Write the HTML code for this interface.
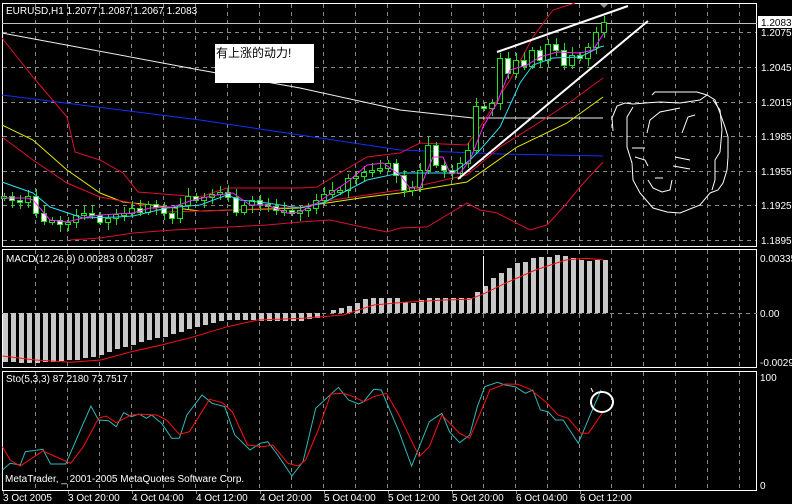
<!DOCTYPE html>
<html><head><meta charset="utf-8"><style>
html,body{margin:0;padding:0;background:#000;width:792px;height:504px;overflow:hidden}
svg{display:block}
text{font-family:"Liberation Sans","Noto Sans CJK SC",sans-serif;font-size:10px;fill:#fff}
</style></head><body>
<svg id="s" width="792" height="504" xmlns="http://www.w3.org/2000/svg">
<g id="grid" stroke="#8a8a8a" stroke-dasharray="4,4" stroke-width="1"></g>
<g fill="none" stroke-width="1">
<rect x="2.5" y="3.5" width="754" height="243" stroke="#fff"/>
<rect x="2.5" y="249.5" width="754" height="118" stroke="#fff"/>
<rect x="2.5" y="371.5" width="754" height="119" stroke="#fff"/>
<line x1="2" y1="23.5" x2="757" y2="23.5" stroke="#c0c0c0"/>
<line x1="2" y1="313.5" x2="757" y2="313.5" stroke="#8a8a8a" stroke-dasharray="4,4"/>
</g>
<g id="bb" fill="none" stroke-width="1">
<polyline stroke="#f0f0f0" points="2,33 200,70 300,88 400,110 473,118 603,118"/>
<polyline stroke="#1030ff" points="2,95 200,120 400,150 500,154 603,156"/>
<polyline stroke="#e8e800" points="2,125 33,140 67,170 100,193 123,202 143,204 200,211 300,208 320,204 367,197 400,193 467,182 517,147 567,123 603,97"/>
<polyline stroke="#dd1030" points="2,38 33,77 67,117 75,152 100,160 123,173 138,192 200,197 227,188 300,188 317,187 333,177 367,157 400,153 420,143 467,145 480,127 510,80 533,37 553,10 575,3"/>
<polyline stroke="#dd1030" points="2,137 33,160 67,183 100,197 133,203 167,212 233,210 300,207 333,200 400,190 467,175 500,147 540,122 573,100 603,78"/>
<polyline stroke="#dd1030" points="70,240 100,238 133,233 173,230 267,225 300,222 330,220 367,228 387,232 400,228 427,227 467,203 480,210 497,213 530,230 547,225 567,203 580,187 603,162"/>
</g>
<g id="candles"></g>
<g fill="none" stroke-width="1">
<polyline stroke="#30e0f0" points="2,182 33,193 50,207 83,218 117,217 133,216 167,208 200,205 227,195 240,200 267,203 300,208 323,203 367,180 400,173 453,173 470,160 480,150 500,127 520,83 533,65 553,58 580,57 600,47 604,46"/>
<polyline stroke="#ff20ff" points="2,198 27,198 33,200 50,220 67,222 87,217 100,215 133,213 150,208 173,207 193,200 217,195 233,193 250,205 267,205 287,213 300,212 317,203 350,180 367,165 383,163 400,175 410,188 420,188 433,157 443,157 450,173 460,173 470,160 483,127 497,103 510,70 527,65 540,57 557,52 580,53 593,50 604,33"/>
<line x1="458" y1="179" x2="648" y2="21" stroke="#fff" stroke-width="2"/>
<line x1="497" y1="52" x2="628" y2="6" stroke="#fff" stroke-width="2"/>
</g>
<polygon points="600,4 608,4 604,8" fill="#909090"/>
<g fill="none" stroke="#fff" stroke-width="1">
<polyline points="652,95 655,92 697,92 707,95 715,100 720,113 725,127 728,137 728,157 727,170 723,183 718,190 710,193"/>
<polyline points="613,131 612,118 617,106 625,103 633,104 645,103 660,102 680,103 700,100 707,95"/>
<polyline points="633,107 627,117 627,147 632,163 633,180 640,193 653,208 667,212 680,213 700,205 710,193"/>
<polyline points="647,133 650,120 660,112 680,108"/>
<polyline points="682,133 688,117 695,115"/>
<polyline points="632,148 645,148"/><polyline points="635,157 645,160 648,166"/>
<polyline points="675,157 690,160"/><polyline points="673,166 690,169"/>
<polyline points="648,180 653,188 662,192 670,190 672,180"/><polyline points="655,178 663,178"/>
<polyline points="713,100 720,110 722,130 720,152 715,160 715,180 712,190"/>
</g>
<rect x="215" y="44" width="99" height="39" fill="#fff"/>
<text x="216" y="57" style="fill:#000;font-size:12px">有上涨的动力!</text>
<text x="6" y="14">EURUSD,H1  1.2077 1.2087 1.2067 1.2083</text>
<rect x="758" y="16" width="34" height="12" fill="#fff"/>
<text x="761" y="26" style="fill:#000">1.2083</text>
<g id="lbl"></g>
<g id="hist" fill="#c8c8c8"></g>
<polyline fill="none" stroke="#ff1010" stroke-width="1" id="sig"/>
<line x1="483.5" y1="256" x2="483.5" y2="292" stroke="#fff"/>
<text x="6" y="262">MACD(12,26,9) 0.00283 0.00287</text>
<polyline fill="none" stroke="#30b8b8" id="stoK"/>
<polyline fill="none" stroke="#ff1010" id="stoD"/>
<ellipse cx="602" cy="402" rx="11" ry="10" fill="none" stroke="#fff" stroke-width="2"/>
<line x1="591" y1="388" x2="593" y2="392" stroke="#fff"/>
<text x="6" y="382">Sto(5,3,3) 87.2180 73.7517</text>
<text x="5" y="482">MetaTrader, _ 2001-2005 MetaQuotes Software Corp.</text>
</svg>
<script>
var NS="http://www.w3.org/2000/svg",s=document.getElementById('s');
function el(p,t,a,tx){var e=document.createElementNS(NS,t);for(var k in a)e.setAttribute(k,a[k]);if(tx)e.textContent=tx;document.getElementById(p).appendChild(e);return e;}
var vx=[];for(var x=35;x<757;x+=32)vx.push(x);
vx.forEach(function(x){el('grid','line',{x1:x+.5,y1:4,x2:x+.5,y2:246});el('grid','line',{x1:x+.5,y1:250,x2:x+.5,y2:367});el('grid','line',{x1:x+.5,y1:372,x2:x+.5,y2:490});});
var hy=[[32,'1.2075'],[67,'1.2045'],[102,'1.2015'],[136,'1.1985'],[171,'1.1955'],[205,'1.1925'],[240,'1.1895']];
hy.forEach(function(h){el('grid','line',{x1:3,y1:h[0]+.5,x2:756,y2:h[0]+.5});el('lbl','text',{x:761,y:h[0]+4},h[1]);});
[[262,'0.00335'],[317,'0.00'],[366,'-0.0029'],[381,'100'],[489,'0']].forEach(function(h){el('lbl','text',{x:760,y:h[0]},h[1]);});
var d=['3 Oct 2005','3 Oct 20:00','4 Oct 04:00','4 Oct 12:00','4 Oct 20:00','5 Oct 04:00','5 Oct 12:00','5 Oct 20:00','6 Oct 04:00','6 Oct 12:00'];
d.forEach(function(t,i){var x=3+64*i+(i?1:0);el('lbl','text',{x:x,y:501},t);el('grid','line',{x1:x+.5,y1:491,x2:x+.5,y2:494,'stroke-dasharray':'none'});});
var c=[196,200,202,196,213,221,220,224,222,215,213,215,222,218,214,213,208,212,204,207,213,218,205,196,200,197,194,192,197,212,205,200,204,206,210,210,213,210,208,200,194,190,190,178,176,172,170,168,163,175,190,187,170,145,165,170,173,163,150,106,108,103,58,73,60,66,50,60,44,50,65,55,58,47,32,22];
var prev=198;
c.forEach(function(cl,i){var x=4+8*i,o=prev;var top=Math.min(o,cl),bot=Math.max(o,cl);if(bot-top<2){bot=top+2;}
var hi=top-3-((i*7)%6),lo=bot+3+((i*5)%6);
el('candles','line',{x1:x+.5,y1:hi,x2:x+.5,y2:lo,stroke:'#20e020'});
el('candles','rect',{x:x-2.5,y:top+.5,width:5,height:bot-top,fill:cl>o?'#fff':'#000',stroke:'#20e020'});prev=cl;});
var h=[362,362,363,363,363,362,362,361,360,360,358,357,355,352,349,347,345,342,340,338,337,334,332,329,327,325,323,321,320,320,320,320,321,321,321,321,321,321,319,318,313,310,308,306,303,299,298,298,298,298,302,303,300,298,298,298,298,298,298,292,286,278,273,268,263,262,258,257,257,255,256,258,260,261,260,260];
h.forEach(function(v,i){var x=3+8*i;el('hist','rect',{x:x,y:Math.min(v,313),width:5,height:Math.abs(v-313)});});
function sc(a){return a.map(function(p){return (p[0]/1.98).toFixed(1)+','+(250+p[1]/3).toFixed(1)}).join(' ');}
document.getElementById('sig').setAttribute('points',sc([[5,318],[70,330],[140,337],[200,330],[260,305],[320,285],[380,262],[450,230],[510,210],[600,205],[680,195],[740,165],[800,157],[880,150],[930,148],[960,130],[1000,100],[1060,60],[1120,30],[1160,25],[1195,30]]));
document.getElementById('stoK').setAttribute('points',sc([[5,660],[20,640],[40,645],[50,605],[85,598],[100,642],[130,642],[180,468],[195,510],[215,512],[230,530],[245,488],[260,500],[275,492],[290,505],[300,495],[320,520],[340,565],[355,565],[370,495],[400,435],[420,460],[445,470],[465,555],[495,600],[515,580],[530,575],[550,615],[578,678],[600,635],[625,475],[670,412],[690,450],[710,462],[720,455],[740,418],[755,420],[790,545],[815,648],[850,515],[875,490],[890,545],[910,578],[930,555],[945,470],[960,410],[985,397],[1000,405],[1020,410],[1040,430],[1055,420],[1070,480],[1085,485],[1100,510],[1115,510],[1145,580],[1170,490],[1190,420]]));
document.getElementById('stoD').setAttribute('points',sc([[5,590],[20,630],[40,648],[85,603],[140,640],[165,590],[195,505],[210,498],[230,518],[260,495],[280,493],[310,495],[330,510],[355,553],[375,545],[415,448],[440,458],[460,485],[490,585],[520,590],[540,585],[570,640],[590,648],[605,630],[630,540],[655,432],[680,430],[700,440],[720,455],[740,440],[765,430],[790,495],[830,620],[850,590],[875,495],[910,550],[930,565],[970,420],[1000,402],[1025,403],[1050,418],[1080,455],[1105,495],[1125,505],[1150,550],[1165,550],[1193,488]]));
</script>
</body></html>
